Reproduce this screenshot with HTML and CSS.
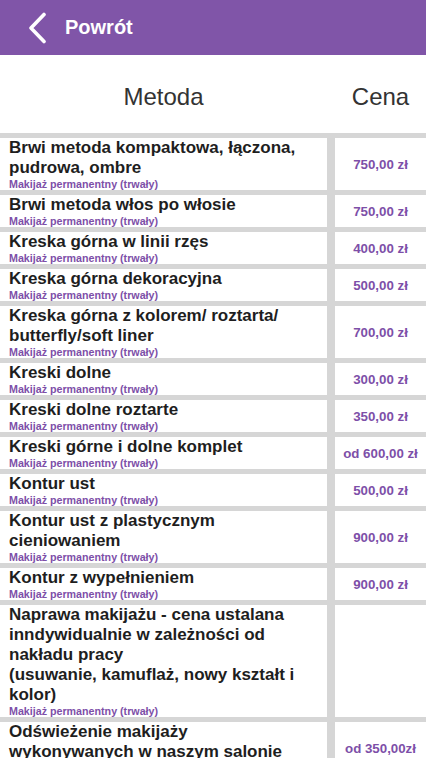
FILE: index.html
```html
<!DOCTYPE html>
<html lang="pl">
<head>
  <meta charset="UTF-8">
  <meta name="viewport" content="width=device-width, initial-scale=1.0">
  <title>Cennik</title>
  <link rel="stylesheet" href="styles.css">
</head>
<body>
  <header class="topbar">
    <a class="back" href="#">
      <svg class="back-icon" width="22" height="32" viewBox="0 0 22 32">
        <path d="M18 2.5 L5 16 L18 29.5" fill="none" stroke="#fff" stroke-width="3.6" stroke-linecap="round" stroke-linejoin="round"/>
      </svg>
      <span>Powrót</span>
    </a>
  </header>

  <div class="list-head">
    <div class="head">Metoda</div>
    <div class="head">Cena</div>
  </div>

  <div class="price-list">
    <div class="cell name"><div class="title">Brwi metoda kompaktowa, łączona, pudrowa, ombre</div><div class="cat">Makijaż permanentny (trwały)</div></div>
    <div class="cell price">750,00 zł</div>

    <div class="cell name"><div class="title">Brwi metoda włos po włosie</div><div class="cat">Makijaż permanentny (trwały)</div></div>
    <div class="cell price">750,00 zł</div>

    <div class="cell name"><div class="title">Kreska górna w linii rzęs</div><div class="cat">Makijaż permanentny (trwały)</div></div>
    <div class="cell price">400,00 zł</div>

    <div class="cell name"><div class="title">Kreska górna dekoracyjna</div><div class="cat">Makijaż permanentny (trwały)</div></div>
    <div class="cell price">500,00 zł</div>

    <div class="cell name"><div class="title">Kreska górna z kolorem/ roztarta/ butterfly/soft liner</div><div class="cat">Makijaż permanentny (trwały)</div></div>
    <div class="cell price">700,00 zł</div>

    <div class="cell name"><div class="title">Kreski dolne</div><div class="cat">Makijaż permanentny (trwały)</div></div>
    <div class="cell price">300,00 zł</div>

    <div class="cell name"><div class="title">Kreski dolne roztarte</div><div class="cat">Makijaż permanentny (trwały)</div></div>
    <div class="cell price">350,00 zł</div>

    <div class="cell name"><div class="title">Kreski górne i dolne komplet</div><div class="cat">Makijaż permanentny (trwały)</div></div>
    <div class="cell price">od 600,00 zł</div>

    <div class="cell name"><div class="title">Kontur ust</div><div class="cat">Makijaż permanentny (trwały)</div></div>
    <div class="cell price">500,00 zł</div>

    <div class="cell name"><div class="title">Kontur ust z plastycznym cieniowaniem</div><div class="cat">Makijaż permanentny (trwały)</div></div>
    <div class="cell price">900,00 zł</div>

    <div class="cell name"><div class="title">Kontur z wypełnieniem</div><div class="cat">Makijaż permanentny (trwały)</div></div>
    <div class="cell price">900,00 zł</div>

    <div class="cell name"><div class="title">Naprawa makijażu - cena ustalana inndywidualnie w zależności od nakładu pracy<br>(usuwanie, kamuflaż, nowy kształt i kolor)</div><div class="cat">Makijaż permanentny (trwały)</div></div>
    <div class="cell price"></div>

    <div class="cell name"><div class="title">Odświeżenie makijaży wykonywanych w naszym salonie</div><div class="cat">Makijaż permanentny (trwały)</div></div>
    <div class="cell price">od 350,00zł</div>
  </div>
</body>
</html>
```

FILE: styles.css
```css
:root {
  --purple: #8055a8;
  --purple-text: #7d4fa8;
  --line: #d6d6d6;
  --text: #1e1e1e;
}

body {
  margin: 0;
  font-family: "Liberation Sans", Arial, sans-serif;
  background: #fff;
  color: var(--text);
}

.topbar {
  height: 55px;
  background: var(--purple);
  display: flex;
  align-items: center;
  padding-left: 26px;
}

.back {
  display: flex;
  align-items: center;
  gap: 17px;
  color: #fff;
  text-decoration: none;
  font-size: 20px;
  font-weight: bold;
}

.back-icon {
  display: block;
}

.list-head {
  display: grid;
  grid-template-columns: 327px 1fr;
  column-gap: 8px;
  height: 78px;
  border-bottom: 5px solid var(--line);
}

.head {
  display: flex;
  align-items: center;
  justify-content: center;
  padding-top: 6px;
  font-size: 24px;
  color: #333;
}

.price-list {
  display: grid;
  grid-template-columns: 327px 1fr;
  gap: 5px 8px;
  background: var(--line);
  padding-bottom: 5px;
}

.cell {
  background: #fff;
}

.name {
  padding: 0 20px 0 9px;
}

.title {
  font-size: 17px;
  font-weight: bold;
  color: var(--text);
}

.cat {
  font-size: 10.7px;
  font-weight: bold;
  color: var(--purple-text);
}

.price {
  display: flex;
  align-items: center;
  justify-content: center;
  font-size: 13.3px;
  font-weight: bold;
  color: var(--purple-text);
}
```
